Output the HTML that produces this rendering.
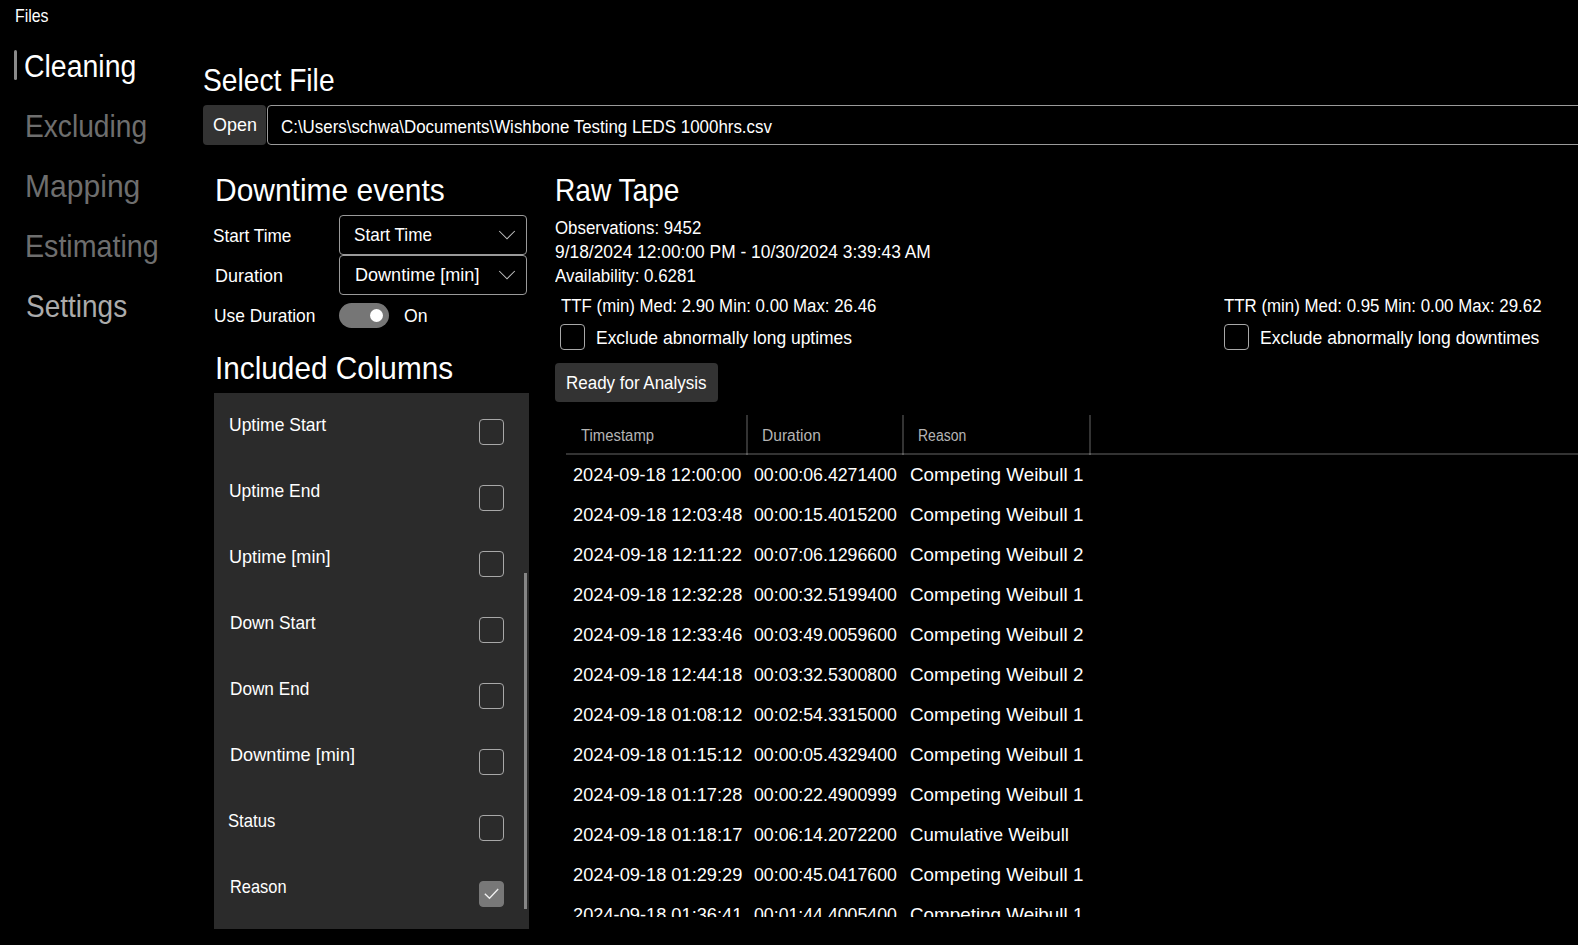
<!DOCTYPE html>
<html><head><meta charset="utf-8"><title>Cleaning</title>
<style>
html,body{margin:0;padding:0;background:#000;width:1578px;height:945px;overflow:hidden;position:relative}
body{font-family:"Liberation Sans",sans-serif}
.t{position:absolute;line-height:1;white-space:pre;transform-origin:0 0}
.b{position:absolute;box-sizing:border-box}
.cb{position:absolute;box-sizing:border-box;width:25px;height:25px;border:1px solid #a8a8a8;border-radius:4px}
</style></head><body>


<div class="b" style="left:14px;top:50px;width:3px;height:30px;background:#8a8a8a;border-radius:2px"></div>
<div class="b" style="left:203px;top:105px;width:63px;height:39.5px;background:#333;border-radius:4px"></div>
<div class="b" style="left:267px;top:105px;width:1400px;height:40px;border:1px solid #9a9a9a;border-radius:4px"></div>
<div class="b" style="left:339px;top:215px;width:188px;height:40px;border:1px solid #9a9a9a;border-radius:4px"></div>
<div class="b" style="left:339px;top:255px;width:188px;height:40px;border:1px solid #9a9a9a;border-radius:4px"></div>
<svg style="position:absolute;left:0;top:0" width="1578" height="945">
<polyline points="499.2,231 507,238.8 514.8,231" fill="none" stroke="#c0c0c0" stroke-width="1.05"/>
<polyline points="499.2,271 507,278.8 514.8,271" fill="none" stroke="#c0c0c0" stroke-width="1.05"/>
</svg>
<div class="b" style="left:339px;top:303px;width:50px;height:25px;background:#767676;border-radius:12.5px"></div>
<div class="b" style="left:369.8px;top:308.8px;width:13.4px;height:13.4px;background:#fff;border-radius:50%"></div>
<div class="b" style="left:214px;top:393px;width:315px;height:536px;background:#2b2b2b"></div>
<div class="b" style="left:524px;top:573px;width:3px;height:336px;background:#868686;border-radius:0"></div>
<div class="b" style="left:555px;top:363.3px;width:162.5px;height:39.2px;background:#333;border-radius:4px"></div>
<div class="cb" style="left:560px;top:324px;height:25.5px"></div>
<div class="cb" style="left:1224px;top:324px;height:25.5px"></div>
<div class="b" style="left:746px;top:415px;width:2px;height:40px;background:rgba(255,255,255,0.2)"></div>
<div class="b" style="left:902px;top:415px;width:2px;height:40px;background:rgba(255,255,255,0.2)"></div>
<div class="b" style="left:1089px;top:415px;width:2px;height:40px;background:rgba(255,255,255,0.2)"></div>
<div class="b" style="left:566px;top:453px;width:1012px;height:2px;background:rgba(255,255,255,0.2)"></div>
<div class="cb" style="left:479px;top:419px;height:26px"></div>
<div class="cb" style="left:479px;top:485px;height:26px"></div>
<div class="cb" style="left:479px;top:551px;height:26px"></div>
<div class="cb" style="left:479px;top:617px;height:26px"></div>
<div class="cb" style="left:479px;top:683px;height:26px"></div>
<div class="cb" style="left:479px;top:749px;height:26px"></div>
<div class="cb" style="left:479px;top:815px;height:26px"></div>
<div class="cb" style="left:479px;top:881px;height:26px;background:#787878;border-color:#787878"></div>
<svg style="position:absolute;left:479px;top:881.3px" width="25" height="25"><polyline points="5.8,12.8 10.5,17.3 19.2,8" fill="none" stroke="#f0f0f0" stroke-width="1.3"/></svg>

<div class="t" style="left:15.36px;top:7.00px;font-size:18.895px;color:#ffffff;transform:scaleX(0.8410)">Files</div>
<div class="t" style="left:23.98px;top:52.00px;font-size:30.814px;color:#ffffff;transform:scaleX(0.9235)">Cleaning</div>
<div class="t" style="left:25.16px;top:111.00px;font-size:30.523px;color:#6e6e6e;transform:scaleX(0.9225)">Excluding</div>
<div class="t" style="left:25.33px;top:171.00px;font-size:30.523px;color:#6e6e6e;transform:scaleX(0.9851)">Mapping</div>
<div class="t" style="left:25.12px;top:231.00px;font-size:30.523px;color:#6e6e6e;transform:scaleX(0.9381)">Estimating</div>
<div class="t" style="left:26.08px;top:291.00px;font-size:30.523px;color:#ababab;transform:scaleX(0.9174)">Settings</div>
<div class="t" style="left:203.28px;top:65.00px;font-size:30.523px;color:#ffffff;transform:scaleX(0.9234)">Select File</div>
<div class="t" style="left:213.00px;top:116.00px;font-size:18.459px;color:#ffffff;transform:scaleX(0.9727)">Open</div>
<div class="t" style="left:280.60px;top:118.00px;font-size:18.023px;color:#ffffff;transform:scaleX(0.9380)">C:\Users\schwa\Documents\Wishbone Testing LEDS 1000hrs.csv</div>
<div class="t" style="left:215.44px;top:175.00px;font-size:30.523px;color:#ffffff;transform:scaleX(0.9818)">Downtime events</div>
<div class="t" style="left:213.35px;top:227.00px;font-size:18.169px;color:#ffffff;transform:scaleX(0.9476)">Start Time</div>
<div class="t" style="left:353.66px;top:226.00px;font-size:18.169px;color:#ffffff;transform:scaleX(0.9415)">Start Time</div>
<div class="t" style="left:215.03px;top:267.00px;font-size:18.605px;color:#ffffff;transform:scaleX(0.9667)">Duration</div>
<div class="t" style="left:355.01px;top:266.00px;font-size:18.169px;color:#ffffff;transform:scaleX(0.9943)">Downtime [min]</div>
<div class="t" style="left:214.07px;top:307.00px;font-size:18.605px;color:#ffffff;transform:scaleX(0.9346)">Use Duration</div>
<div class="t" style="left:404.30px;top:308.00px;font-size:17.878px;color:#ffffff;transform:scaleX(0.9870)">On</div>
<div class="t" style="left:214.95px;top:353.00px;font-size:30.523px;color:#ffffff;transform:scaleX(0.9748)">Included Columns</div>
<div class="t" style="left:228.84px;top:416.00px;font-size:18.169px;color:#ffffff;transform:scaleX(0.9630)">Uptime Start</div>
<div class="t" style="left:228.84px;top:482.00px;font-size:18.169px;color:#ffffff;transform:scaleX(0.9602)">Uptime End</div>
<div class="t" style="left:228.80px;top:548.00px;font-size:18.169px;color:#ffffff;transform:scaleX(0.9960)">Uptime [min]</div>
<div class="t" style="left:229.95px;top:614.00px;font-size:18.169px;color:#ffffff;transform:scaleX(0.9528)">Down Start</div>
<div class="t" style="left:229.95px;top:680.00px;font-size:18.169px;color:#ffffff;transform:scaleX(0.9463)">Down End</div>
<div class="t" style="left:229.90px;top:746.00px;font-size:18.169px;color:#ffffff;transform:scaleX(0.9992)">Downtime [min]</div>
<div class="t" style="left:228.28px;top:812.00px;font-size:18.169px;color:#ffffff;transform:scaleX(0.9176)">Status</div>
<div class="t" style="left:229.90px;top:878.00px;font-size:18.169px;color:#ffffff;transform:scaleX(0.9033)">Reason</div>
<div class="t" style="left:554.86px;top:175.00px;font-size:30.523px;color:#ffffff;transform:scaleX(0.9212)">Raw Tape</div>
<div class="t" style="left:554.50px;top:220.00px;font-size:17.878px;color:#ffffff;transform:scaleX(0.9445)">Observations: 9452</div>
<div class="t" style="left:554.50px;top:244.00px;font-size:17.878px;color:#ffffff;transform:scaleX(0.9728)">9/18/2024 12:00:00 PM - 10/30/2024 3:39:43 AM</div>
<div class="t" style="left:554.50px;top:268.00px;font-size:17.878px;color:#ffffff;transform:scaleX(0.9480)">Availability: 0.6281</div>
<div class="t" style="left:560.60px;top:298.00px;font-size:17.878px;color:#ffffff;transform:scaleX(0.9428)">TTF (min) Med: 2.90 Min: 0.00 Max: 26.46</div>
<div class="t" style="left:596.22px;top:330.00px;font-size:17.878px;color:#ffffff;transform:scaleX(0.9770)">Exclude abnormally long uptimes</div>
<div class="t" style="left:565.75px;top:375.00px;font-size:17.878px;color:#ffffff;transform:scaleX(0.9503)">Ready for Analysis</div>
<div class="t" style="left:1224.00px;top:298.00px;font-size:17.878px;color:#ffffff;transform:scaleX(0.9437)">TTR (min) Med: 0.95 Min: 0.00 Max: 29.62</div>
<div class="t" style="left:1259.62px;top:330.00px;font-size:17.878px;color:#ffffff;transform:scaleX(0.9806)">Exclude abnormally long downtimes</div>
<div class="t" style="left:581.20px;top:428.00px;font-size:15.988px;color:#b4b4b4;transform:scaleX(0.9321)">Timestamp</div>
<div class="t" style="left:761.93px;top:428.00px;font-size:15.988px;color:#b4b4b4;transform:scaleX(0.9746)">Duration</div>
<div class="t" style="left:918.12px;top:428.00px;font-size:15.988px;color:#b4b4b4;transform:scaleX(0.8759)">Reason</div>
<div style="position:absolute;left:0;top:0;width:1578px;height:917px;overflow:hidden">
<div class="t" style="left:572.50px;top:467.00px;font-size:17.733px;color:#ffffff;transform:scaleX(1.0230)">2024-09-18 12:00:00</div>
<div class="t" style="left:754.00px;top:467.00px;font-size:17.733px;color:#ffffff;transform:scaleX(1.0000)">00:00:06.4271400</div>
<div class="t" style="left:910.20px;top:467.00px;font-size:17.733px;color:#ffffff;transform:scaleX(1.0626)">Competing Weibull 1</div>
<div class="t" style="left:572.50px;top:507.00px;font-size:17.733px;color:#ffffff;transform:scaleX(1.0293)">2024-09-18 12:03:48</div>
<div class="t" style="left:754.00px;top:507.00px;font-size:17.733px;color:#ffffff;transform:scaleX(1.0000)">00:00:15.4015200</div>
<div class="t" style="left:910.20px;top:507.00px;font-size:17.733px;color:#ffffff;transform:scaleX(1.0626)">Competing Weibull 1</div>
<div class="t" style="left:572.50px;top:547.00px;font-size:17.733px;color:#ffffff;transform:scaleX(1.0356)">2024-09-18 12:11:22</div>
<div class="t" style="left:754.00px;top:547.00px;font-size:17.733px;color:#ffffff;transform:scaleX(1.0000)">00:07:06.1296600</div>
<div class="t" style="left:910.20px;top:547.00px;font-size:17.733px;color:#ffffff;transform:scaleX(1.0626)">Competing Weibull 2</div>
<div class="t" style="left:572.50px;top:587.00px;font-size:17.733px;color:#ffffff;transform:scaleX(1.0293)">2024-09-18 12:32:28</div>
<div class="t" style="left:754.00px;top:587.00px;font-size:17.733px;color:#ffffff;transform:scaleX(1.0000)">00:00:32.5199400</div>
<div class="t" style="left:910.20px;top:587.00px;font-size:17.733px;color:#ffffff;transform:scaleX(1.0626)">Competing Weibull 1</div>
<div class="t" style="left:572.50px;top:627.00px;font-size:17.733px;color:#ffffff;transform:scaleX(1.0293)">2024-09-18 12:33:46</div>
<div class="t" style="left:754.00px;top:627.00px;font-size:17.733px;color:#ffffff;transform:scaleX(1.0000)">00:03:49.0059600</div>
<div class="t" style="left:910.20px;top:627.00px;font-size:17.733px;color:#ffffff;transform:scaleX(1.0626)">Competing Weibull 2</div>
<div class="t" style="left:572.50px;top:667.00px;font-size:17.733px;color:#ffffff;transform:scaleX(1.0293)">2024-09-18 12:44:18</div>
<div class="t" style="left:754.00px;top:667.00px;font-size:17.733px;color:#ffffff;transform:scaleX(1.0000)">00:03:32.5300800</div>
<div class="t" style="left:910.20px;top:667.00px;font-size:17.733px;color:#ffffff;transform:scaleX(1.0626)">Competing Weibull 2</div>
<div class="t" style="left:572.50px;top:707.00px;font-size:17.733px;color:#ffffff;transform:scaleX(1.0293)">2024-09-18 01:08:12</div>
<div class="t" style="left:754.00px;top:707.00px;font-size:17.733px;color:#ffffff;transform:scaleX(1.0000)">00:02:54.3315000</div>
<div class="t" style="left:910.20px;top:707.00px;font-size:17.733px;color:#ffffff;transform:scaleX(1.0626)">Competing Weibull 1</div>
<div class="t" style="left:572.50px;top:747.00px;font-size:17.733px;color:#ffffff;transform:scaleX(1.0293)">2024-09-18 01:15:12</div>
<div class="t" style="left:754.00px;top:747.00px;font-size:17.733px;color:#ffffff;transform:scaleX(1.0000)">00:00:05.4329400</div>
<div class="t" style="left:910.20px;top:747.00px;font-size:17.733px;color:#ffffff;transform:scaleX(1.0626)">Competing Weibull 1</div>
<div class="t" style="left:572.50px;top:787.00px;font-size:17.733px;color:#ffffff;transform:scaleX(1.0293)">2024-09-18 01:17:28</div>
<div class="t" style="left:754.00px;top:787.00px;font-size:17.733px;color:#ffffff;transform:scaleX(1.0000)">00:00:22.4900999</div>
<div class="t" style="left:910.20px;top:787.00px;font-size:17.733px;color:#ffffff;transform:scaleX(1.0626)">Competing Weibull 1</div>
<div class="t" style="left:572.50px;top:827.00px;font-size:17.733px;color:#ffffff;transform:scaleX(1.0293)">2024-09-18 01:18:17</div>
<div class="t" style="left:754.00px;top:827.00px;font-size:17.733px;color:#ffffff;transform:scaleX(1.0000)">00:06:14.2072200</div>
<div class="t" style="left:910.20px;top:827.00px;font-size:17.733px;color:#ffffff;transform:scaleX(1.0503)">Cumulative Weibull</div>
<div class="t" style="left:572.50px;top:867.00px;font-size:17.733px;color:#ffffff;transform:scaleX(1.0293)">2024-09-18 01:29:29</div>
<div class="t" style="left:754.00px;top:867.00px;font-size:17.733px;color:#ffffff;transform:scaleX(1.0000)">00:00:45.0417600</div>
<div class="t" style="left:910.20px;top:867.00px;font-size:17.733px;color:#ffffff;transform:scaleX(1.0626)">Competing Weibull 1</div>
<div class="t" style="left:572.50px;top:907.00px;font-size:17.733px;color:#ffffff;transform:scaleX(1.0293)">2024-09-18 01:36:41</div>
<div class="t" style="left:754.00px;top:907.00px;font-size:17.733px;color:#ffffff;transform:scaleX(1.0000)">00:01:44.4005400</div>
<div class="t" style="left:910.20px;top:907.00px;font-size:17.733px;color:#ffffff;transform:scaleX(1.0626)">Competing Weibull 1</div>
</div>
</body></html>
